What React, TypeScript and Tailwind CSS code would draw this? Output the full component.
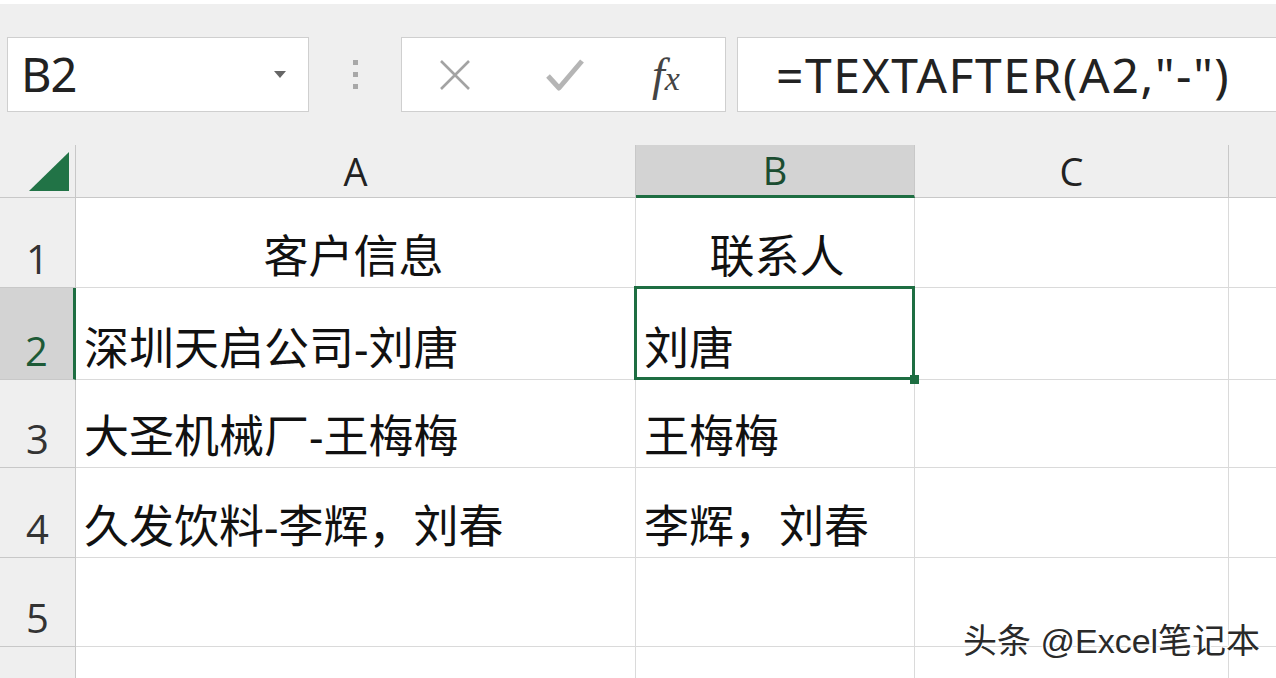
import React from 'react';

const CJK = "font-['Noto_Sans','Noto_Sans_CJK_SC',sans-serif]";

const rows = [
  { n: '1', h: 'h-[90px]', a: '客户信息', b: '联系人', center: true },
  { n: '2', h: 'h-[92px]', a: '深圳天启公司-刘唐', b: '刘唐', active: true },
  { n: '3', h: 'h-[88px]', a: '大圣机械厂-王梅梅', b: '王梅梅' },
  { n: '4', h: 'h-[90px]', a: '久发饮料-李辉，刘春', b: '李辉，刘春' },
  { n: '5', h: 'h-[89px]', a: '', b: '' },
  { n: '', h: 'h-[40px]', a: '', b: '' },
];

function Toolbar() {
  return (
    <div className="h-[145px] bg-[#efefef] border-t-[4px] border-white flex items-start pt-[33px]">
      {/* name box */}
      <div className="ml-[7px] w-[302px] h-[75px] bg-white border border-[#cfcfcf] flex items-center pl-[13px] pr-[22px]">
        <span className="text-[47px] text-[#222] tracking-[-1px] leading-none">B2</span>
        <svg className="ml-auto" width="12" height="8" viewBox="0 0 12 8">
          <path d="M0 0 L12 0 L6 7 Z" fill="#666" />
        </svg>
      </div>
      {/* dots */}
      <div className="w-[92px] h-[75px] flex flex-col items-center justify-center gap-[7px]">
        <div className="w-[5px] h-[5px] bg-[#a8a8a8]" />
        <div className="w-[5px] h-[5px] bg-[#a8a8a8]" />
        <div className="w-[5px] h-[5px] bg-[#a8a8a8]" />
      </div>
      {/* buttons */}
      <div className="w-[325px] h-[75px] bg-white border border-[#cfcfcf] flex items-center">
        <svg className="ml-[36px]" width="34" height="34" viewBox="0 0 34 34">
          <path d="M3 3 L31 31 M31 3 L3 31" stroke="#a3a3a3" strokeWidth="2.6" fill="none" />
        </svg>
        <svg className="ml-[74px]" width="38" height="34" viewBox="0 0 38 34">
          <path d="M2 18 L13 30 L36 3" stroke="#b5b5b5" strokeWidth="5" fill="none" strokeLinejoin="round" />
        </svg>
        <span className="ml-[68px] font-['Liberation_Serif',serif] italic text-[46px] text-[#444] leading-none">
          f<span className="text-[34px]">x</span>
        </span>
      </div>
      {/* formula */}
      <div className="ml-[11px] flex-1 h-[75px] bg-white border border-[#cfcfcf] border-r-0 flex items-center pl-[38px]">
        <span className="text-[48px] text-[#222] leading-none tracking-[1.6px] whitespace-nowrap">
          =TEXTAFTER(A2,"-")
        </span>
      </div>
    </div>
  );
}

export default function App() {
  return (
    <div className={`w-[1276px] h-[678px] overflow-hidden bg-white relative ${CJK}`}>
      <Toolbar />
      <div className="grid grid-cols-[76px_560px_279px_314px_47px]">
        {/* header row */}
        <div className="h-[53px] bg-[#efefef] border-r border-b border-[#c8c8c8] flex items-end justify-end pr-[6px] pb-[6px]">
          <svg width="40" height="39" viewBox="0 0 40 39">
            <path d="M40 0 L40 39 L0 39 Z" fill="#217346" />
          </svg>
        </div>
        <div className="h-[53px] bg-[#efefef] border-r border-b border-[#c8c8c8] flex items-center justify-center text-[38px] text-[#222] font-['Open_Sans',sans-serif]">A</div>
        <div className="h-[53px] bg-[#d3d3d3] border-r border-[#c8c8c8] border-b-[3px] border-b-[#1e6e42] flex items-center justify-center text-[38px] text-[#1b4d31] font-['Open_Sans',sans-serif]">B</div>
        <div className="h-[53px] bg-[#efefef] border-r border-b border-[#c8c8c8] flex items-center justify-center text-[38px] text-[#222] font-['Open_Sans',sans-serif]">C</div>
        <div className="h-[53px] bg-[#efefef] border-b border-[#c8c8c8]" />

        {rows.map((r, i) => (
          <React.Fragment key={i}>
            <div
              className={`${r.h} border-b border-[#c8c8c8] flex items-end justify-center pb-[8px] text-[40px] leading-none font-['Open_Sans',sans-serif] ${
                r.active
                  ? 'bg-[#d3d3d3] text-[#1d5a37] border-r-[3px] border-r-[#1e6e42]'
                  : 'bg-[#efefef] text-[#333] border-r border-r-[#c8c8c8]'
              }`}
            >
              {r.n}
            </div>
            <div
              className={`${r.h} border-r border-b border-[#dadada] flex items-end pb-[9px] text-[45px] leading-none text-[#111] whitespace-nowrap ${
                r.center ? 'justify-center pr-[4px]' : 'pl-[8px]'
              }`}
            >
              {r.a}
            </div>
            <div
              className={`${r.h} relative border-r border-b border-[#dadada] flex items-end pb-[9px] text-[45px] leading-none text-[#111] whitespace-nowrap ${
                r.active ? 'z-10' : ''
              } ${r.center ? 'justify-center pl-[4px]' : 'pl-[8px]'}`}
            >
              {r.b}
              {r.active && (
                <>
                  <div className="absolute -left-[2px] -top-[2px] -right-[1px] -bottom-[1px] border-[3px] border-[#1e6e42]" />
                  <div className="absolute -right-[5px] -bottom-[5px] w-[9px] h-[9px] bg-[#1e6e42]" />
                </>
              )}
            </div>
            <div className={`${r.h} border-r border-b border-[#dadada]`} />
            <div className={`${r.h} border-b border-[#dadada]`} />
          </React.Fragment>
        ))}
      </div>
      {/* watermark */}
      <div className="absolute left-[963px] top-[624px] text-[34px] leading-none text-[#2a2a2a] whitespace-nowrap font-['Liberation_Sans','Noto_Sans_CJK_SC',sans-serif] [text-shadow:0_0_2px_#fff,0_0_3px_#fff,1px_1px_0_#fff,-1px_-1px_0_#fff]">
        头条 @Excel笔记本
      </div>
    </div>
  );
}
